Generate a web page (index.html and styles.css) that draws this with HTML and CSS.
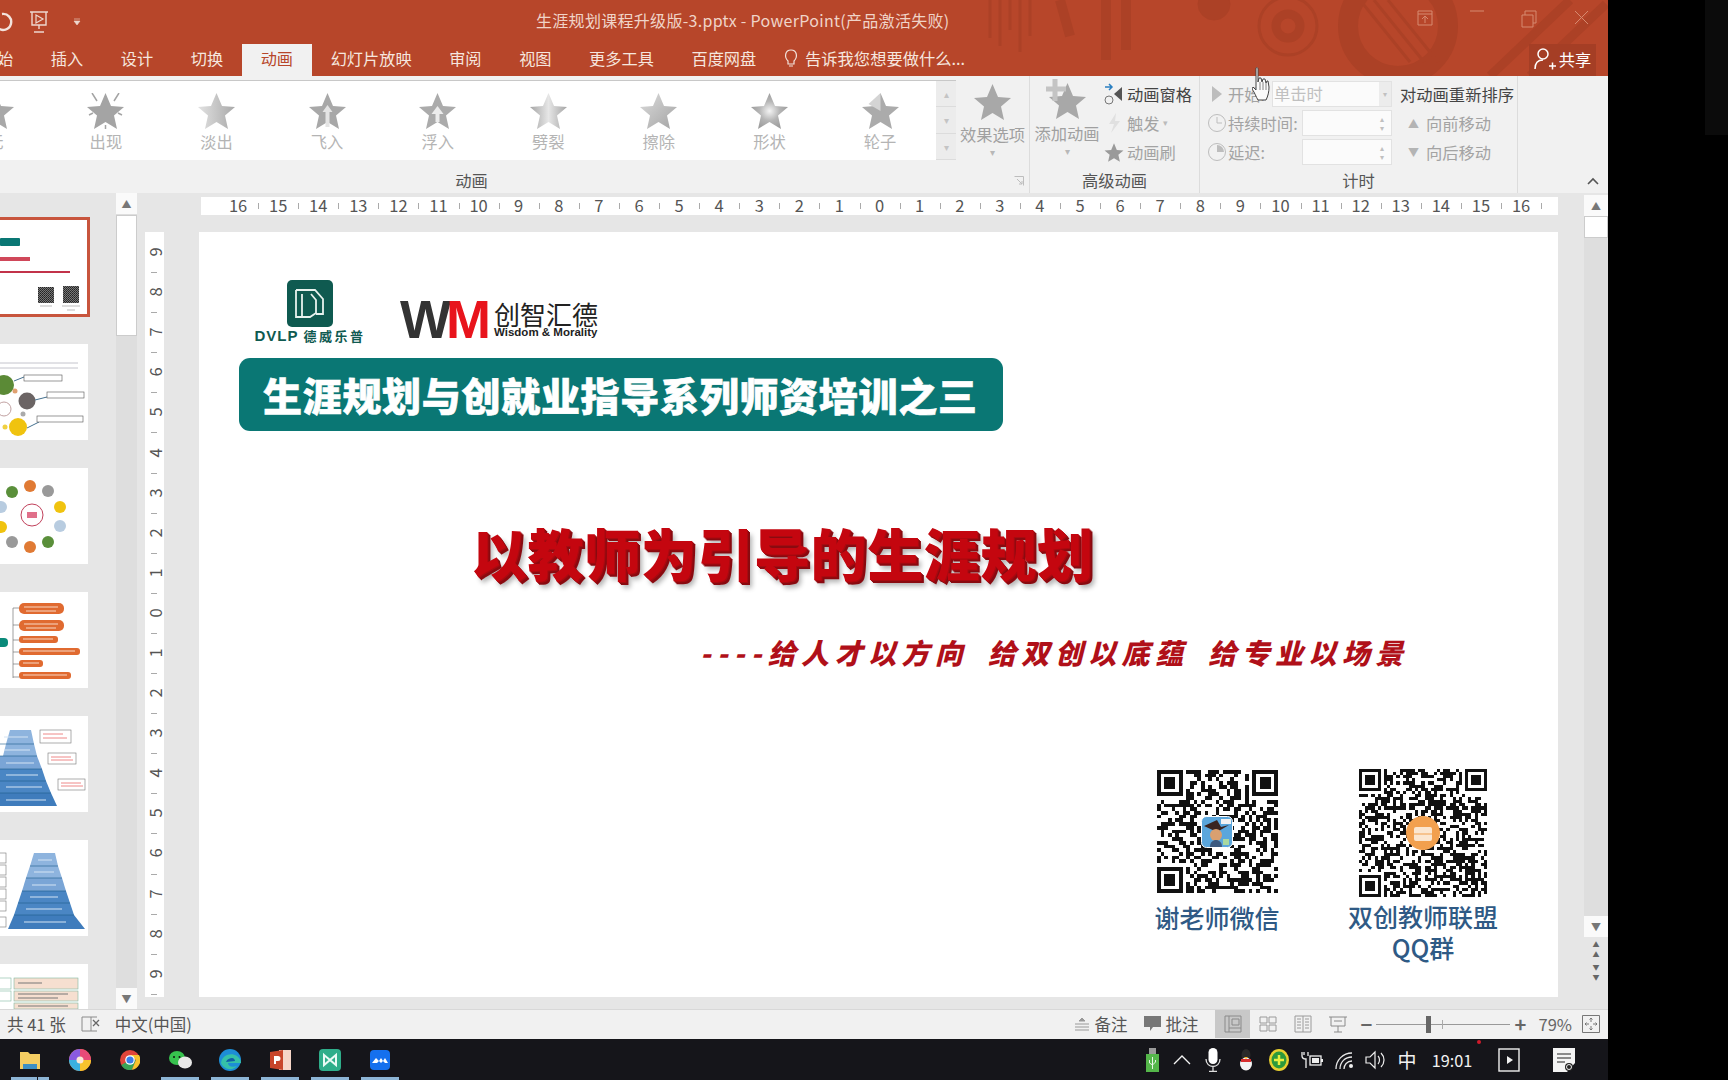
FILE: index.html
```html
<!DOCTYPE html>
<html lang="zh-CN">
<head>
  <meta charset="UTF-8">
  <title>生涯规划课程升级版-3.pptx - PowerPoint</title>
  <link rel="stylesheet" href="styles.css">
</head>
<body>

  <svg class="defs" width="0" height="0">
    <defs>
      <polygon id="star" points="18.5,0 24,13 37,14 27,22.5 30,36 18.5,29 7,36 10,22.5 0,14 13,13"/>
      <linearGradient id="fade" x1="0" x2="1"><stop offset="0" stop-color="#e2e2e2"/><stop offset="1" stop-color="#a9a9a9"/></linearGradient>
      <linearGradient id="split" x1="0" x2="1"><stop offset="0" stop-color="#a5a5a5"/><stop offset=".5" stop-color="#e6e6e6"/><stop offset="1" stop-color="#a5a5a5"/></linearGradient>
      <linearGradient id="wipe" x1="0" x2="1" y1="0" y2="1"><stop offset="0" stop-color="#dcdcdc"/><stop offset="1" stop-color="#a3a3a3"/></linearGradient>
      <radialGradient id="shape"><stop offset="0" stop-color="#f4f4f4"/><stop offset=".55" stop-color="#b5b5b5"/><stop offset="1" stop-color="#9e9e9e"/></radialGradient>
      <pattern id="tiny-qr" width="2" height="2" patternUnits="userSpaceOnUse"><rect width="2" height="2" fill="#777"/><rect width="1" height="1" fill="#222"/><rect x="1" y="1" width="1" height="1" fill="#333"/></pattern>
    </defs>
  </svg>

  <div class="screen">
    <div class="main">
      <div class="window">

        <!-- cabecalho -->
        <div class="head">
          <svg class="head-art" width="648" height="76" viewBox="0 0 648 76">
            <g fill="none" stroke="#ac4126">
              <path stroke-width="3" d="M30 0v38M40 0v46M50 0v30M60 0v52M70 0v36"/>
              <path stroke-width="10" d="M100 0l10 36M146 0v60M166 0v50"/>
              <circle cx="254" cy="4" r="16" fill="#ac4126"/>
              <circle cx="328" cy="26" r="12" stroke-width="9"/>
              <circle cx="328" cy="26" r="29" stroke-width="3"/>
              <circle cx="438" cy="26" r="50" stroke-width="20"/>
              <path stroke-width="3" d="M400 0l50 62M414 0l50 62M428 0l50 62"/>
              <path stroke-width="9" d="M530 76L610 0M570 76L646 4"/>
            </g>
          </svg>
          <div class="titlebar">
            <div class="qat">
              <svg width="14" height="22" viewBox="0 0 14 22"><path d="M2 5a8 8 0 1 1-4 14" transform="translate(0 -2)" fill="none" stroke="#f3e3dc" stroke-width="2.4"/></svg>
              <svg class="qat-show" width="22" height="24" viewBox="0 0 22 24"><path d="M2 2h18M4 2v13h14V2M11 15v4M6 22h10" fill="none" stroke="#eed8cf" stroke-width="1.4"/><path d="M8 5l7 4-7 4z" fill="none" stroke="#eed8cf" stroke-width="1.2"/></svg>
              <svg class="qat-more" width="8" height="8" viewBox="0 0 8 8"><path d="M1 1h6M1 3h6l-3 4z" fill="#eed8cf" stroke="#eed8cf" stroke-width=".6"/></svg>
            </div>
            <div class="doc-title">生涯规划课程升级版-3.pptx - PowerPoint(产品激活失败)</div>
            <div class="win-btns">
              <span class="win-btn"><svg width="18" height="16" viewBox="0 0 18 16"><path d="M2 1h14v14H2zM2 4h14M9 13V7M6 9l3-3 3 3" fill="none" stroke="#d68a70"/></svg></span>
              <span class="win-btn"><svg width="14" height="2" viewBox="0 0 14 2"><path d="M0 1h14" stroke="#d68a70"/></svg></span>
              <span class="win-btn"><svg width="16" height="18" viewBox="0 0 16 18"><path d="M1 5h11v12H1zM4 5V1h11v12h-3" fill="none" stroke="#d68a70"/></svg></span>
              <span class="win-btn"><svg width="15" height="15" viewBox="0 0 15 15"><path d="M1 1l13 13M14 1L1 14" stroke="#d68a70"/></svg></span>
            </div>
          </div>
          <div class="tabs">
            <span class="tab tab-first">开始</span>
            <span class="tab">插入</span>
            <span class="tab">设计</span>
            <span class="tab">切换</span>
            <span class="tab tab-on">动画</span>
            <span class="tab">幻灯片放映</span>
            <span class="tab">审阅</span>
            <span class="tab">视图</span>
            <span class="tab">更多工具</span>
            <span class="tab">百度网盘</span>
            <span class="tell">
              <svg width="14" height="20" viewBox="0 0 14 20"><path d="M4 13C0 9 1 2 7 2s7 7 3 11v3H4zM5 18h4" fill="none" stroke="#f3e3dc" stroke-width="1.2"/></svg>
              告诉我您想要做什么...
            </span>
            <span class="share">
              <svg width="22" height="24" viewBox="0 0 22 24"><circle cx="9" cy="7" r="5" fill="none" stroke="#fff" stroke-width="1.5"/><path d="M1 22c0-6 3-9 8-9M15 19h7M18.500 15.500v7" fill="none" stroke="#fff" stroke-width="1.5"/></svg>
              共享
            </span>
          </div>
        </div>

        <!-- faixa de opcoes -->
        <div class="ribbon">
          <div class="group group-anim">
            <div class="group-body">
              <div class="gallery">
                <div class="fx"><svg width="37" height="36"><use href="#star" fill="#a8a8a8"/></svg><span>无</span></div>
                <div class="fx"><svg width="37" height="36"><use href="#star" fill="#a4a4a4"/><path d="M5 0l5 8M32 0l-5 8M18.500 32v6M2 22l4-2M35 22l-4-2" stroke="#a4a4a4" stroke-width="1.5"/></svg><span>出现</span></div>
                <div class="fx"><svg width="37" height="36"><use href="#star" fill="url(#fade)"/></svg><span>淡出</span></div>
                <div class="fx"><svg width="37" height="36"><use href="#star" fill="#a8a8a8"/><path d="M18.500 12l-5 7h3v15h4V19h3z" fill="#e4e4e4"/></svg><span>飞入</span></div>
                <div class="fx"><svg width="37" height="36"><use href="#star" fill="#ababab"/><path d="M18.500 13l-6 8h4v8h4v-8h4z" fill="#ececec"/></svg><span>浮入</span></div>
                <div class="fx"><svg width="37" height="36"><use href="#star" fill="url(#split)"/></svg><span>劈裂</span></div>
                <div class="fx"><svg width="37" height="36"><use href="#star" fill="url(#wipe)"/></svg><span>擦除</span></div>
                <div class="fx"><svg width="37" height="36"><use href="#star" fill="url(#shape)"/></svg><span>形状</span></div>
                <div class="fx"><svg width="37" height="36"><use href="#star" fill="#ababab"/><path d="M18.500 0v18l-12-7z" fill="#d4d4d4"/></svg><span>轮子</span></div>
                <div class="gallery-scroll">
                  <span class="gs-cell">▴</span>
                  <span class="gs-cell">▾</span>
                  <span class="gs-cell gs-more">▾</span>
                </div>
              </div>
              <div class="big-btn">
                <svg width="37" height="36"><use href="#star" fill="#a8a8a8"/></svg>
                <span>效果选项</span>
                <i class="drop">▾</i>
              </div>
            </div>
            <div class="group-label">动画
              <svg class="launcher" width="10" height="10" viewBox="0 0 10 10"><path d="M.5.500h9v9M3 3l5 5M8 5v3H5" fill="none" stroke="#bdbdbd"/></svg>
            </div>
          </div>

          <div class="group group-adv">
            <div class="group-body">
              <div class="big-btn">
                <svg class="add-star" width="42" height="40" viewBox="-5 -4 42 40"><use href="#star" transform="translate(-2 0)" fill="#a8a8a8"/><path d="M4-4v22M-5 6h20" stroke="#c4c4c4" stroke-width="5"/></svg>
                <span>添加动画</span>
                <i class="drop">▾</i>
              </div>
              <div class="rows">
                <div class="row row-dark">
                  <svg width="20" height="24" viewBox="0 0 20 24"><path d="M1 5h6M5 2l3 3-3 3" fill="none" stroke="#2a7fc1" stroke-width="1.5"/><circle cx="5" cy="18" r="4" fill="none" stroke="#777"/><path d="M10 12l8-7v14z" fill="#555"/></svg>
                  动画窗格
                </div>
                <div class="row">
                  <svg width="20" height="24" viewBox="0 0 20 24"><path d="M12 2L5 13h5L7 22l9-12h-5z" fill="#e0e0e0"/></svg>
                  触发 <i class="drop-inline">▾</i>
                </div>
                <div class="row">
                  <svg width="20" height="24" viewBox="-1 -6 39 46"><use href="#star" fill="#9a9a9a"/></svg>
                  动画刷
                </div>
              </div>
            </div>
            <div class="group-label">高级动画</div>
          </div>

          <div class="group group-time">
            <div class="group-body">
              <div class="rows time-rows">
                <div class="row">
                  <svg width="14" height="18" viewBox="0 0 14 18"><path d="M2 1l10 8-10 8z" fill="#bdbdbd"/></svg>
                  开始:
                  <span class="field field-select">单击时<i>▾</i></span>
                </div>
                <div class="row">
                  <svg width="20" height="20" viewBox="0 0 20 20"><circle cx="10" cy="10" r="8.500" fill="none" stroke="#bdbdbd"/><path d="M10 4v6h5" fill="none" stroke="#bdbdbd"/></svg>
                  持续时间:
                  <span class="field"><i>▴<br>▾</i></span>
                </div>
                <div class="row">
                  <svg width="20" height="20" viewBox="0 0 20 20"><circle cx="10" cy="10" r="8.500" fill="none" stroke="#bdbdbd"/><path d="M10 3a7 7 0 0 1 7 7h-7z" fill="#bdbdbd"/></svg>
                  延迟:
                  <span class="field"><i>▴<br>▾</i></span>
                </div>
              </div>
              <div class="rows order-rows">
                <div class="row row-dark">对动画重新排序</div>
                <div class="row"><i class="tri">▲</i>向前移动</div>
                <div class="row"><i class="tri">▼</i>向后移动</div>
              </div>
            </div>
            <div class="group-label">计时</div>
          </div>

          <div class="ribbon-end">
            <svg width="12" height="8" viewBox="0 0 12 8"><path d="M1 7l5-5 5 5" fill="none" stroke="#555" stroke-width="1.6"/></svg>
          </div>
        </div>

        <!-- area de trabalho -->
        <div class="work">
          <div class="thumbs">
            <div class="thumb thumb-on">
              <svg width="87" height="94" viewBox="0 3 87 94">
                <rect y="21" width="20" height="8" rx="1" fill="#0a7774"/>
                <rect y="40" width="30" height="4" fill="#d0485a"/>
                <rect y="54" width="70" height="2" fill="#c2334a"/>
                <rect x="38" y="70" width="16" height="16" fill="url(#tiny-qr)"/>
                <rect x="63" y="69" width="16" height="17" fill="url(#tiny-qr)"/>
                <path d="M40 89h12M62 89h18M67 93h8" stroke="#bbb" stroke-width="1"/>
              </svg>
            </div>
            <div class="thumb">
              <svg width="88" height="96" viewBox="0 0 88 96">
                <path d="M0 19h78M0 24h78" stroke="#c4c4cc"/>
                <circle cx="4" cy="41" r="10" fill="#5b8a36"/>
                <circle cx="27" cy="57" r="8.500" fill="#6b6464"/>
                <circle cx="18" cy="83" r="9" fill="#f0c30f"/>
                <circle cx="15" cy="47" r="2.500" fill="#e0a070"/><circle cx="23" cy="70" r="2.500" fill="#aaa"/><circle cx="5" cy="83" r="2.500" fill="#f0d040"/>
                <circle cx="4" cy="65" r="7" fill="none" stroke="#c0a0a0"/>
                <path d="M14 37l10-4M35 56l12-3M27 84l12-6" stroke="#44708f"/>
                <rect x="24" y="31" width="38" height="6" fill="#fff" stroke="#555" stroke-width=".6"/>
                <rect x="47" y="48" width="37" height="6" fill="#fff" stroke="#555" stroke-width=".6"/>
                <rect x="37" y="72" width="46" height="6" fill="#fff" stroke="#555" stroke-width=".6"/>
              </svg>
            </div>
            <div class="thumb">
              <svg width="88" height="96" viewBox="0 0 88 96">
                <circle cx="32" cy="47" r="11" fill="#fff" stroke="#c0405a"/>
                <rect x="27" y="44" width="10" height="6" fill="#e0708a"/>
                <g fill="#e07a34"><circle cx="30" cy="18" r="6"/><circle cx="30" cy="79" r="6"/></g>
                <g fill="#5a8f3a"><circle cx="12" cy="24" r="6"/><circle cx="48" cy="74" r="6"/></g>
                <g fill="#999"><circle cx="48" cy="23" r="6"/><circle cx="12" cy="74" r="6"/></g>
                <g fill="#f0c30f"><circle cx="60" cy="39" r="6"/><circle cx="1" cy="59" r="6"/></g>
                <g fill="#b8cce0"><circle cx="60" cy="58" r="6"/><circle cx="1" cy="39" r="6"/></g>
              </svg>
            </div>
            <div class="thumb">
              <svg width="88" height="96" viewBox="0 0 88 96">
                <path d="M13 16v70M13 16h6M13 33h6M13 48h6M13 60h6M13 72h6M13 85h6" fill="none" stroke="#777" stroke-width=".7"/>
                <rect x="-6" y="46" width="14" height="9" rx="4" fill="#0a8a7a"/>
                <g fill="#e06a30">
                  <rect x="19" y="11" width="45" height="11" rx="5"/>
                  <rect x="19" y="28" width="45" height="11" rx="5"/>
                  <rect x="19" y="44" width="39" height="7" rx="3"/>
                  <rect x="19" y="56" width="61" height="7" rx="3"/>
                  <rect x="19" y="68" width="24" height="7" rx="3"/>
                  <rect x="19" y="80" width="52" height="7" rx="3"/>
                </g>
                <path d="M24 15h34M26 19h30M24 32h34M26 36h30M23 47h30M23 59h52M23 71h16M23 83h44" stroke="#f8d8c4"/>
              </svg>
            </div>
            <div class="thumb">
              <svg width="88" height="96" viewBox="0 0 88 96">
                <path d="M10 14h21l3 14H6z" fill="#8eb4de"/>
                <path d="M6 28h28l3 12H3z" fill="#8eb4de"/>
                <path d="M3 40h34l5 13H0V40z" fill="#7aa5d6"/>
                <path d="M0 53h42l4 12H0z" fill="#4a86c4"/>
                <path d="M0 65h46l5 12H0z" fill="#4a86c4"/>
                <path d="M0 77h51l6 13H0z" fill="#3f7cbc"/>
                <path d="M0 28h34M0 40h37M0 53h42M0 65h46M0 77h51" stroke="#1d5a8a" stroke-width=".6"/>
                <path d="M4 21h24M4 34h26M6 47h28M6 59h32M6 71h36M6 84h40" stroke="#d4e4f4"/>
                <rect x="40" y="14" width="31" height="13" fill="#fff" stroke="#777" stroke-width=".6"/>
                <rect x="48" y="37" width="28" height="11" fill="#fff" stroke="#777" stroke-width=".6"/>
                <rect x="58" y="63" width="27" height="11" fill="#fff" stroke="#777" stroke-width=".6"/>
                <path d="M43 18h20M43 22h24M51 41h20M51 44h22M61 67h20M61 70h22" stroke="#e88"/>
              </svg>
            </div>
            <div class="thumb">
              <svg width="88" height="96" viewBox="0 0 88 96">
                <path d="M34 13h21l3 13H30z" fill="#8eb4de"/>
                <path d="M30 26h28l4 12H26z" fill="#8eb4de"/>
                <path d="M26 38h36l4 13H22z" fill="#7aa5d6"/>
                <path d="M22 51h44l4 12H18z" fill="#4a86c4"/>
                <path d="M18 63h52l4 12H14z" fill="#4a86c4"/>
                <path d="M14 75h60l11 14H8z" fill="#3f7cbc"/>
                <path d="M30 26h28M26 38h36M22 51h44M18 63h52M14 75h60" stroke="#1d5a8a" stroke-width=".6"/>
                <path d="M38 20h14M34 32h20M32 45h24M30 57h28M26 69h36M24 82h42" stroke="#d4e4f4"/>
                <g fill="#fff" stroke="#777" stroke-width=".6">
                  <rect x="-2" y="13" width="8" height="10"/><rect x="-2" y="25" width="8" height="10"/><rect x="-2" y="37" width="8" height="10"/>
                  <rect x="-2" y="49" width="8" height="10"/><rect x="-2" y="61" width="8" height="10"/><rect x="-2" y="77" width="8" height="10"/>
                </g>
              </svg>
            </div>
            <div class="thumb">
              <svg width="88" height="96" viewBox="0 0 88 96">
                <g stroke="#80b8a0" stroke-width=".6">
                  <rect x="14" y="14" width="64" height="11" fill="#f6dfd0"/>
                  <rect x="14" y="27" width="64" height="10" fill="#f6dfd0"/>
                  <rect x="14" y="39" width="64" height="6" fill="#f6dfd0"/>
                  <rect x="-2" y="14" width="13" height="11" fill="#fff"/>
                  <rect x="-2" y="27" width="13" height="10" fill="#fff"/>
                </g>
                <path d="M18 19h24M18 30h50M18 34h40M18 42h50" stroke="#777"/>
              </svg>
            </div>
          </div>

          <div class="vscroll">
            <span class="sb-btn">▲</span>
            <span class="sb-thumb sb-thumb-left"></span>
            <span class="sb-fill"></span>
            <span class="sb-btn">▼</span>
          </div>

          <div class="canvas">
            <div class="hruler" data-ruler="h"></div>
            <div class="canvas-row">
              <div class="vruler" data-ruler="v"></div>

              <div class="slide">
                <div class="logos">
                  <div class="dvlp">
                    <svg width="46" height="47" viewBox="0 0 46 47">
                      <rect width="46" height="47" rx="5" fill="#0f5a50"/>
                      <path d="M9 10h19l8 9v15h-7M15 14v23h8l6-4V20l-5-6M9 10v27h6" fill="none" stroke="#e8f2ee" stroke-width="1.800"/>
                    </svg>
                    <div class="dvlp-name">DVLP <span>德威乐普</span></div>
                  </div>
                  <div class="wm">
                    <div class="wm-mark">W<em>M</em></div>
                    <div class="wm-text">
                      <div class="wm-cn">创智汇德</div>
                      <div class="wm-en">Wisdom &amp; Morality</div>
                    </div>
                  </div>
                </div>
                <div class="banner">生涯规划与创就业指导系列师资培训之三</div>
                <h1 class="main-title">以教师为引导的生涯规划</h1>
                <div class="sub-title"><span class="dashes">----</span>给人才以方向 给双创以底蕴 给专业以场景</div>
                <div class="qr-row">
                  <div class="qr-col">
                    <div class="qr qr-a">
                      <svg class="qr-code" data-mods="33" data-seed="17" width="121" height="123"></svg>
                      <svg class="qr-logo" width="32" height="32" viewBox="0 0 32 32">
                        <rect x=".5" y=".5" width="31" height="31" rx="5" fill="#5aa6dc" stroke="#fff"/>
                        <path d="M3 10l13-6 4 7 8-2-12 7z" fill="#3a2420"/>
                        <path d="M20 3h10v5H20z" fill="#f2f2f2"/>
                        <circle cx="15" cy="19" r="6" fill="#d9a070"/>
                        <path d="M9 31c0-5 3-7 6-7s6 2 6 7z" fill="#3c5a80"/>
                        <rect x="22" y="23" width="6" height="6" fill="#a8d8a0"/>
                      </svg>
                    </div>
                    <div class="qr-label">谢老师微信</div>
                  </div>
                  <div class="qr-col">
                    <div class="qr qr-b">
                      <svg class="qr-code" data-mods="41" data-seed="91" width="128" height="128"></svg>
                      <svg class="qr-logo" width="34" height="34" viewBox="0 0 34 34">
                        <circle cx="17" cy="17" r="17" fill="#f2a04e"/>
                        <rect x="8" y="11" width="18" height="14" rx="2" fill="#fbe6cf"/>
                        <path d="M13 11V8h8v3M8 18h18" fill="none" stroke="#f2a04e" stroke-width="1.200"/>
                      </svg>
                    </div>
                    <div class="qr-label qr-label-b">双创教师联盟<br>QQ群</div>
                  </div>
                </div>
              </div>
            </div>
          </div>

          <div class="vscroll vscroll-right">
            <span class="sb-btn">▲</span>
            <span class="sb-thumb"></span>
            <span class="sb-fill"></span>
            <span class="sb-btn">▼</span>
            <span class="sb-btn sb-double">▲<br>▲</span>
            <span class="sb-btn sb-double">▼<br>▼</span>
          </div>
        </div>

        <!-- barra de status -->
        <div class="status">
          <span class="st-count">共 41 张</span>
          <svg class="st-spell" width="20" height="18" viewBox="0 0 20 18"><path d="M1 2h9v14H1zM10 2h6M10 16h6" fill="none" stroke="#8a8a8a"/><path d="M12 5l6 6M18 5l-6 6" stroke="#666" stroke-width="1.300"/></svg>
          <span class="st-lang">中文(中国)</span>
          <span class="st-item st-first">
            <svg width="16" height="16" viewBox="0 0 16 16"><path d="M5 5l3-3 3 3zM1 8h14M1 11h14M1 14h14" fill="#999" stroke="#999"/></svg>
            备注
          </span>
          <span class="st-item">
            <svg width="17" height="16" viewBox="0 0 17 16"><path d="M0 0h17v11h-8l-3 4v-4H0z" fill="#777"/></svg>
            批注
          </span>
          <span class="view view-on"><svg width="18" height="18" viewBox="0 0 18 18"><path d="M1 1h16v16H1zM5 1v16M5 13h12M8 4h7v6H8z" fill="none" stroke="#8a8a8a"/></svg></span>
          <span class="view"><svg width="18" height="16" viewBox="0 0 18 16"><path d="M1 1h7v6H1zM10 1h7v6h-7zM1 9h7v6H1zM10 9h7v6h-7z" fill="none" stroke="#9a9a9a"/></svg></span>
          <span class="view"><svg width="18" height="18" viewBox="0 0 18 18"><path d="M1 1h16v16H1zM9 1v16M3 4h4M3 7h4M3 10h4M3 13h4M11 4h4M11 7h4M11 10h4M11 13h4" fill="none" stroke="#9a9a9a"/></svg></span>
          <span class="view"><svg width="18" height="18" viewBox="0 0 18 18"><path d="M0 2h18M2 2v9h14V2M9 11v6M5 17h8M5 6h8" fill="none" stroke="#8a8a8a"/></svg></span>
          <span class="zoom-minus">−</span>
          <span class="zoom-track"><i class="zoom-mid"></i><i class="zoom-knob"></i></span>
          <span class="zoom-plus">+</span>
          <span class="zoom-val">79%</span>
          <svg class="fit" width="18" height="18" viewBox="0 0 18 18"><path d="M.5.500h17v17H.5zM9 3v4M7.500 4.500L9 3l1.500 1.500M9 15v-4M7.500 13.500L9 15l1.500-1.500M3 9h4M4.500 7.500L3 9l1.500 1.500M15 9h-4M13.500 7.500L15 9l-1.500 1.500" fill="none" stroke="#777"/></svg>
        </div>
      </div>

      <div class="outside"><div class="outside-glow"></div></div>
    </div>

    <!-- barra de tarefas -->
    <div class="taskbar">
      <div class="apps">
        <span class="app app-split">
          <svg width="20" height="18" viewBox="0 0 20 18"><path d="M0 1h8l2 2h10v15H0z" fill="#f4cd62"/><path d="M3 13h14v5H3z" fill="#3d8fc4"/></svg>
        </span>
        <span class="app app-idle">
          <svg width="22" height="22" viewBox="0 0 22 22"><circle cx="11" cy="11" r="11" fill="#f0883a"/><path d="M11 0a11 11 0 0 1 11 11H11z" fill="#e84a78"/><path d="M11 11h11a11 11 0 0 1-11 11z" fill="#f7c32d"/><path d="M0 11a11 11 0 0 0 11 11V11z" fill="#3ab0e0"/><path d="M0 11A11 11 0 0 1 11 0v11z" fill="#8a5ae0"/><circle cx="11" cy="11" r="3.500" fill="#fbe8d8"/></svg>
        </span>
        <span class="app app-idle">
          <svg width="20" height="20" viewBox="0 0 20 20"><circle cx="10" cy="10" r="10" fill="#e2453a"/><path d="M1.300 15A10 10 0 0 0 12 19.800L16 10H10z" fill="#3aa457"/><path d="M12 19.800A10 10 0 0 0 19 5H10l6 5z" fill="#f7c32d"/><circle cx="10" cy="10" r="4.800" fill="#fff"/><circle cx="10" cy="10" r="3.600" fill="#3b7de8"/></svg>
        </span>
        <span class="app">
          <svg width="23" height="18" viewBox="0 0 23 18"><ellipse cx="8" cy="7" rx="8" ry="7" fill="#37c24e"/><ellipse cx="16" cy="11.500" rx="7" ry="6" fill="#e8e8e8"/><circle cx="5" cy="6" r="1" fill="#111"/><circle cx="10.500" cy="6" r="1" fill="#111"/></svg>
        </span>
        <span class="app">
          <svg width="22" height="22" viewBox="0 0 22 22"><circle cx="11" cy="11" r="11" fill="#1d8dd6"/><path d="M2 14C3 6 12 3 18 7c3 2 4 5 4 7h-13c0 3 4 5 9 3-4 5-13 4-16-3z" fill="#35c1a8"/><path d="M7 13c1-3 4-4 6-4s3 2 3 3z" fill="#0f5ea8"/></svg>
        </span>
        <span class="app">
          <svg width="21" height="20" viewBox="0 0 21 20"><path d="M9 0h12v20H9z" fill="#f6d6c8"/><path d="M0 2l13-2v20L0 18z" fill="#c8452a"/><path d="M4 6h4a2 2 0 0 1 0 5H6v3H4z" fill="#fff"/></svg>
        </span>
        <span class="app">
          <svg width="22" height="22" viewBox="0 0 22 22"><rect width="22" height="22" rx="4" fill="#2fae8a"/><path d="M5 6l12 10V6L5 16z" fill="none" stroke="#eafaf4" stroke-width="2"/></svg>
        </span>
        <span class="app">
          <svg width="20" height="20" viewBox="0 0 20 20"><rect width="20" height="20" rx="4" fill="#1570ee"/><path d="M2 13l4-5 3 3 2-3 2 3 2-3 3 5h-3l-2-2-2 2-2-2-2 2z" fill="#fff"/></svg>
        </span>
      </div>
      <div class="tray">
        <span class="tr"><svg width="13" height="24" viewBox="0 0 13 24"><rect x="3" width="7" height="6" fill="#9a9a9a"/><rect y="6" width="13" height="18" fill="#54b64a"/><path d="M6.500 9v12M3.500 12v3l3 2 3-3v-2" fill="none" stroke="#e8f6e8"/></svg></span>
        <span class="tr"><svg width="18" height="10" viewBox="0 0 18 10"><path d="M1 9l8-8 8 8" fill="none" stroke="#f4f4f4" stroke-width="1.300"/></svg></span>
        <span class="tr tr-wide"><svg width="16" height="24" viewBox="0 0 16 24"><rect x="3.500" y="0" width="9" height="16" rx="4.500" fill="#fff"/><path d="M1 11c0 10 14 10 14 0M8 19v4M4 23.500h8" fill="none" stroke="#ddd" stroke-width="1.300"/></svg></span>
        <span class="tr tr-wide"><svg width="14" height="22" viewBox="0 0 14 22"><ellipse cx="7" cy="6" rx="4.500" ry="6" fill="#2a2a2a"/><ellipse cx="7" cy="15" rx="6" ry="6.500" fill="#f4f4f4"/><path d="M2 10h10v3H2z" fill="#d83030"/><path d="M5 8h4l-2 2z" fill="#f5b020"/></svg></span>
        <span class="tr tr-wide"><svg width="20" height="22" viewBox="0 0 20 22"><ellipse cx="10" cy="11" rx="10" ry="11" fill="#e8d030"/><ellipse cx="10" cy="11" rx="7.500" ry="8.500" fill="#2c9a3c"/><path d="M10 6v10M5 11h10" stroke="#e8f040" stroke-width="2.500"/></svg></span>
        <span class="tr tr-wide"><svg width="22" height="18" viewBox="0 0 22 18"><path d="M1 1v4c0 2 2 3 4 3v9M3 1v3M7 1v4" fill="none" stroke="#eee" stroke-width="1.300"/><rect x="9" y="5" width="11" height="9" fill="none" stroke="#eee" stroke-width="1.300"/><rect x="11" y="7" width="7" height="5" fill="#eee"/><rect x="20" y="8" width="2" height="3" fill="#eee"/></svg></span>
        <span class="tr tr-wide"><svg width="20" height="20" viewBox="0 0 20 20"><path d="M1 19C1 10 8 3 17 3M5 19C5 12 10 7 17 7M9 19c0-4 3-8 8-8" fill="none" stroke="#e8e8e8" stroke-width="1.300"/><circle cx="16" cy="16" r="2" fill="#eee"/></svg></span>
        <span class="tr tr-sound"><svg width="22" height="20" viewBox="0 0 22 20"><path d="M1 7h4l5-5v16l-5-5H1z" fill="none" stroke="#eee" stroke-width="1.200"/><path d="M13 6c2 2 2 6 0 8M16 3c4 4 4 10 0 14" fill="none" stroke="#eee" stroke-width="1.200"/></svg></span>
        <span class="tr tr-ime">中</span>
        <span class="tr-clock">19:01<i class="red-dot"></i></span>
        <span class="tr-video"><svg width="22" height="24" viewBox="0 0 22 24"><rect x="1" y="1" width="20" height="22" fill="none" stroke="#f0f0f0" stroke-width="1.400"/><path d="M9 8l6 4-6 4z" fill="#f0f0f0"/></svg></span>
        <span class="tr-note"><svg width="22" height="24" viewBox="0 0 22 24"><path d="M0 0h22v15l-8 9H0z" fill="#f4f4f4"/><path d="M4 6h14M4 10h14M4 14h8" stroke="#222" stroke-width="1.200"/><circle cx="16" cy="19" r="4" fill="#222"/><circle cx="16" cy="19" r="2.500" fill="none" stroke="#eee"/></svg></span>
      </div>
    </div>

    <!-- cursor -->
    <svg class="cursor" width="18" height="34" viewBox="0 0 18 34">
      <path d="M4 1c1-1 2 0 2 1v13l1-4h2l1 4 1-3h2l1 4 1-2h1l1 6c0 5-1 9-3 13H6C4 30 3 26 0 22l1-2 3 3z" fill="#fbfbfb" stroke="#444" stroke-width="1"/>
      <path d="M8 15v8M11 15v8M14 16v7" stroke="#666" stroke-width=".8"/>
    </svg>
  </div>

  <script src="script.js"></script>
</body>
</html>
```

FILE: styles.css
```css
:root {
  --laranja: #b7462a;
  --laranja-escuro: #a53e25;
  --faixa: #f1f1f1;
  --fundo: #e6e6e6;
  --trilha: #dedede;
  --cinza: #a9a9a9;
  --escuro: #444;
  --teal: #0a7774;
  --azul: #2f5a85;
}

* {
  box-sizing: border-box;
}

html, body {
  margin: 0;
  height: 100%;
  background: #000;
  overflow: hidden;
}

body {
  font-family: "Noto Sans CJK SC", "Noto Sans", sans-serif;
  font-size: 16.3px;
  color: var(--escuro);
}

i, em {
  font-style: normal;
}

.defs {
  position: absolute;
}

.screen {
  position: relative;
  width: 1728px;
  height: 1080px;
  display: flex;
  flex-direction: column;
}

.main {
  display: flex;
  height: 1039px;
}

.window {
  width: 1608px;
  display: flex;
  flex-direction: column;
  overflow: hidden;
}

.outside {
  flex: 1;
  display: flex;
  justify-content: flex-end;
}

.outside-glow {
  width: 23px;
  height: 135px;
  background: #0b0b0b;
}

/* cabecalho */
.head {
  position: relative;
  height: 76px;
  background: var(--laranja);
  color: #f6e6df;
}

.head-art {
  position: absolute;
  top: 0;
  left: 960px;
}

.titlebar {
  position: relative;
  height: 44px;
  display: flex;
  align-items: center;
}

.qat {
  width: 536px;
  display: flex;
  align-items: center;
  flex-shrink: 0;
}

.qat-show {
  margin-left: 14px;
}

.qat-more {
  margin-left: 23px;
}

.doc-title {
  color: #f0d4c8;
  white-space: nowrap;
  font-size: 16px;
  letter-spacing: 0.3px;
  margin-top: -4px;
}

.win-btns {
  margin-left: auto;
  display: flex;
  padding-right: 1px;
  margin-top: -6px;
}

.win-btn {
  width: 52px;
  display: flex;
  justify-content: center;
}

.tabs {
  position: relative;
  height: 32px;
  display: flex;
  align-items: stretch;
  font-size: 16.2px;
  line-height: 28px;
}

.tab {
  padding: 0 18.8px;
  white-space: nowrap;
}

.tab-first {
  margin-left: -38px;
}

.tab-on {
  background: var(--faixa);
  color: var(--laranja);
}

.tell {
  margin-left: 9px;
  display: flex;
  align-items: center;
  gap: 7px;
  padding-bottom: 4px;
  font-size: 16.3px;
}

.share {
  margin-left: auto;
  margin-right: 12px;
  width: 67px;
  background: var(--laranja-escuro);
  display: flex;
  align-items: center;
  justify-content: center;
  gap: 3px;
  color: #fff;
  padding-bottom: 2px;
}

/* faixa de opcoes */
.ribbon {
  height: 117px;
  background: var(--faixa);
  display: flex;
  flex-shrink: 0;
}

.group {
  display: flex;
  flex-direction: column;
  border-right: 1px solid #dcdcdc;
}

.group-body {
  height: 88px;
  display: flex;
}

.group-label {
  position: relative;
  flex: 1;
  text-align: center;
  line-height: 26px;
  padding-top: 3px;
  color: #555;
}

.group-anim {
  width: 1030px;
}

.group-anim .group-label {
  padding-right: 86px;
}

.group-adv {
  width: 170px;
}

.group-time {
  width: 318px;
}

.launcher {
  position: absolute;
  right: 5px;
  top: 12px;
}

.gallery {
  width: 957px;
  height: 80px;
  margin-top: 4px;
  background: #fff;
  border-top: 1px solid #c8c8c8;
  display: flex;
  overflow: hidden;
  position: relative;
}

.fx {
  flex: 0 0 110.6px;
  display: flex;
  flex-direction: column;
  align-items: center;
  padding-top: 12px;
  color: #b4b4b4;
  line-height: 24px;
}

.fx:first-child {
  margin-left: -60px;
}

.gallery-scroll {
  width: 20px;
  margin-left: auto;
  background: #ececec;
  display: flex;
  flex-direction: column;
  color: #c4c4c4;
  font-size: 10px;
  flex-shrink: 0;
}

.gs-cell {
  flex: 1;
  display: flex;
  align-items: center;
  justify-content: center;
  border-bottom: 1px solid #dcdcdc;
}

.big-btn {
  flex-shrink: 0;
  width: 73px;
  display: flex;
  flex-direction: column;
  align-items: center;
  padding-top: 8px;
  color: #a0a0a0;
  line-height: 22px;
  white-space: nowrap;
}

.big-btn span {
  margin-top: 3px;
}

.add-star {
  margin-top: -5px;
}

.group-adv .big-btn {
  width: 74px;
}

.drop {
  font-size: 10px;
  line-height: 14px;
  color: #b8b8b8;
}

.rows {
  display: flex;
  flex-direction: column;
  padding-top: 3px;
  color: #a3a3a3;
  white-space: nowrap;
}

.row {
  height: 29px;
  flex-shrink: 0;
  display: flex;
  align-items: center;
  gap: 3px;
}

.row-dark {
  color: #444;
}

.drop-inline {
  font-size: 9px;
  color: #bbb;
}

.time-rows {
  width: 192px;
  padding-left: 7px;
}

.time-rows .row {
  gap: 1px;
}

.time-rows svg {
  width: 20px;
}

.field {
  margin-left: auto;
  width: 90px;
  height: 26px;
  background: #fbfbfb;
  border: 1px solid #e2e2e2;
  display: flex;
  align-items: center;
  justify-content: flex-end;
  font-size: 8px;
  line-height: 9px;
  color: #c0c0c0;
  padding-right: 7px;
  text-align: center;
  flex-shrink: 0;
}

.field-select {
  width: 120px;
  justify-content: space-between;
  font-size: 16.3px;
  padding-left: 1px;
  padding-right: 0;
}

.field-select i {
  font-size: 8px;
  width: 12px;
  height: 100%;
  line-height: 24px;
  background: #ececec;
}

.order-rows {
  margin-left: 8px;
}

.order-rows .row {
  gap: 7px;
}

.tri {
  font-size: 11px;
  color: #b4b4b4;
  padding-left: 8px;
}

.ribbon-end {
  flex: 1;
  display: flex;
  align-items: flex-end;
  justify-content: flex-end;
  padding: 0 9px 8px 0;
}

/* area de trabalho */
.work {
  height: 816px;
  background: var(--fundo);
  display: flex;
  flex-shrink: 0;
}

.thumbs {
  width: 116px;
  height: 100%;
  overflow: hidden;
  flex-shrink: 0;
  padding-top: 24px;
  display: flex;
  flex-direction: column;
  gap: 28px;
}

.thumb {
  width: 88px;
  height: 96px;
  background: #fff;
  flex-shrink: 0;
}

.thumb svg {
  display: block;
  filter: blur(0.35px);
}

.thumb-on {
  width: 90px;
  height: 100px;
  border: solid #c8553d;
  border-width: 3px 3px 3px 0;
  margin-bottom: -1px;
}

.vscroll {
  width: 21px;
  background: var(--trilha);
  display: flex;
  flex-direction: column;
  flex-shrink: 0;
}

.sb-btn {
  height: 21px;
  flex-shrink: 0;
  background: #fafafa;
  color: #777;
  font-size: 10px;
  display: flex;
  align-items: center;
  justify-content: center;
  text-align: center;
  line-height: 8px;
}

.sb-thumb {
  height: 22px;
  flex-shrink: 0;
  background: #fff;
  border: 1px solid #ccc;
  margin-top: 1px;
}

.sb-thumb-left {
  height: 121px;
}

.sb-fill {
  flex: 1;
}

.sb-double {
  height: 23px;
  background: transparent;
  font-size: 7px;
  line-height: 10px;
  color: #666;
}

.canvas {
  width: 1447px;
  flex-shrink: 0;
  padding-top: 4px;
}

.hruler {
  margin-left: 64px;
  width: 1357px;
  height: 18px;
  background: #fff;
  padding-left: 17px;
  display: flex;
}

.h-cell {
  position: relative;
  flex: 0 0 40.1px;
  text-align: center;
  font-size: 16.5px;
  line-height: 17px;
  color: #555;
}

.h-cell::after {
  content: "";
  position: absolute;
  right: -1px;
  top: 6px;
  width: 1px;
  height: 6px;
  background: #aaa;
}

.canvas-row {
  margin-top: 17px;
  display: flex;
}

.vruler {
  margin-left: 8px;
  margin-right: 35px;
  width: 19px;
  height: 765px;
  background: #fff;
  flex-shrink: 0;
}

.v-cell {
  position: relative;
  height: 40.1px;
  display: flex;
  align-items: center;
  justify-content: center;
  font-size: 16.5px;
  color: #555;
}

.v-cell span {
  transform: rotate(-90deg);
}

.v-cell::after {
  content: "";
  position: absolute;
  bottom: -1px;
  left: 6px;
  width: 6px;
  height: 1px;
  background: #aaa;
}

.vscroll-right {
  width: 24px;
  padding-top: 2px;
  padding-bottom: 26px;
  background: var(--fundo);
}

.vscroll-right .sb-fill {
  background: var(--trilha);
}

.vscroll-right .sb-thumb {
  margin-top: 0;
}

/* slide */
.slide {
  width: 1359px;
  height: 765px;
  background: #fff;
  flex-shrink: 0;
  padding-top: 48px;
}

.logos {
  height: 65px;
  display: flex;
  padding-left: 55px;
  gap: 34px;
}

.dvlp {
  width: 112px;
  display: flex;
  flex-direction: column;
  align-items: center;
}

.dvlp-name {
  font-family: "Liberation Sans", sans-serif;
  font-weight: bold;
  font-size: 15px;
  line-height: 18px;
  color: #0f5a50;
  white-space: nowrap;
  letter-spacing: 1px;
}

.dvlp-name span {
  font-family: "Noto Sans CJK SC", sans-serif;
  font-size: 13px;
  letter-spacing: 2.5px;
}

.wm {
  display: flex;
  padding-top: 20px;
  gap: 4px;
}

.wm-mark {
  font-family: "Liberation Sans", sans-serif;
  font-weight: bold;
  font-size: 54px;
  line-height: 38px;
  letter-spacing: -5px;
  color: #333;
  width: 90px;
}

.wm-mark em {
  color: #e8141c;
}

.wm-text {
  width: 108px;
}

.wm-cn {
  font-size: 26px;
  line-height: 27px;
  color: #222;
  white-space: nowrap;
}

.wm-en {
  font-family: "Liberation Sans", sans-serif;
  font-weight: bold;
  font-size: 11.5px;
  line-height: 11px;
  color: #222;
  white-space: nowrap;
}

.banner {
  margin: 13px 0 0 40px;
  width: 764px;
  height: 73px;
  background: var(--teal);
  border-radius: 11px;
  color: #fff;
  font-weight: 900;
  font-size: 39px;
  letter-spacing: 0.7px;
  line-height: 73px;
  padding-left: 24px;
  white-space: nowrap;
  -webkit-text-stroke: 0.6px #fff;
}

.main-title {
  margin: 83px 0 0 272px;
  font-size: 56px;
  line-height: 76px;
  font-weight: 900;
  letter-spacing: 0.6px;
  color: #c4060f;
  white-space: nowrap;
  text-shadow: 1px 1px 0 #a80a10, 2px 2px 0 #8a0a10, 3px 3px 0 #8a0a10, 5px 6px 5px rgba(0, 0, 0, 0.3);
}

.sub-title {
  margin: 42px 0 0 501px;
  font-size: 28px;
  line-height: 40px;
  font-weight: 900;
  font-style: italic;
  letter-spacing: 5.4px;
  word-spacing: 8px;
  color: #b01019;
  white-space: nowrap;
}

.dashes {
  letter-spacing: 6.2px;
}

.qr-row {
  margin: 97px 0 0 933px;
  display: flex;
  gap: 36px;
}

.qr-col {
  width: 170px;
  display: flex;
  flex-direction: column;
  align-items: center;
  text-align: center;
}

.qr {
  position: relative;
  line-height: 0;
}

.qr-a {
  margin-top: 1px;
}

.qr-logo {
  position: absolute;
  top: 50%;
  left: 50%;
  transform: translate(-50%, -50%);
}

.qr-label {
  margin-top: 9px;
  font-size: 25px;
  line-height: 31px;
  font-weight: 500;
  color: var(--azul);
  white-space: nowrap;
}

.qr-label-b {
  margin-top: 4px;
}

/* barra de status */
.status {
  height: 30px;
  flex-shrink: 0;
  background: var(--faixa);
  border-top: 1px solid #d8d8d8;
  display: flex;
  align-items: center;
  color: #555;
  white-space: nowrap;
  padding-right: 8px;
  padding-bottom: 1px;
  font-size: 16.5px;
}

.st-count {
  margin-left: 7px;
}

.st-spell {
  margin-left: 15px;
}

.st-lang {
  margin-left: 14px;
}

.st-item {
  display: flex;
  align-items: center;
  gap: 4px;
  margin-left: 17px;
}

.st-first {
  margin-left: auto;
}

.view {
  width: 35px;
  height: 100%;
  display: flex;
  align-items: center;
  justify-content: center;
}

.view-on {
  background: #c8c8c8;
  margin-left: 17px;
}

.zoom-minus,
.zoom-plus {
  font-size: 20px;
  font-weight: bold;
  color: #666;
  width: 18px;
  text-align: center;
  line-height: 1;
}

.zoom-minus {
  margin-left: 2px;
}

.zoom-track {
  position: relative;
  width: 134px;
  height: 1px;
  background: #999;
  margin: 0 1px;
}

.zoom-knob,
.zoom-mid {
  position: absolute;
  top: -8px;
  width: 5px;
  height: 17px;
  left: 50px;
  background: #666;
}

.zoom-mid {
  left: 66px;
  width: 1px;
  top: -4px;
  height: 9px;
  background: #aaa;
}

.zoom-val {
  margin-left: 9px;
  color: #666;
}

.fit {
  margin-left: 10px;
}

/* barra de tarefas */
.taskbar {
  height: 41px;
  width: 1608px;
  background: #15151a;
  display: flex;
  align-items: center;
  flex-shrink: 0;
  position: relative;
}

.apps {
  display: flex;
  height: 100%;
  padding-left: 5px;
}

.app {
  position: relative;
  width: 50px;
  display: flex;
  align-items: center;
  justify-content: center;
}

.app::after {
  content: "";
  position: absolute;
  left: 6px;
  right: 6px;
  bottom: 0;
  height: 3px;
  background: #8db5d6;
}

.app-idle::after {
  display: none;
}

.app-split::before {
  content: "";
  position: absolute;
  left: 32px;
  bottom: 0;
  width: 1px;
  height: 3px;
  background: #15151a;
  z-index: 1;
}

.tray {
  margin-left: auto;
  margin-right: 17px;
  display: flex;
  align-items: center;
  color: #f2f2f2;
  height: 100%;
}

.tr {
  width: 29px;
  display: flex;
  justify-content: center;
}

.tr-wide {
  width: 33px;
}

.tr-sound {
  width: 30px;
}

.tr-ime {
  width: 32px;
  font-size: 19px;
}

.tr-clock {
  position: relative;
  width: 58px;
  text-align: center;
}

.red-dot {
  position: absolute;
  top: -8px;
  right: 0;
  width: 4px;
  height: 4px;
  border-radius: 50%;
  background: #d11a2a;
}

.tr-video {
  width: 56px;
  display: flex;
  justify-content: center;
}

.tr-note {
  width: 54px;
  display: flex;
  justify-content: center;
}

.cursor {
  position: absolute;
  left: 1252px;
  top: 67px;
}
```

FILE: script.js
```js
// reguas
function montaRegua(el, max, classe) {
  for (let i = -max; i <= max; i++) {
    const cel = document.createElement('div');
    const num = document.createElement('span');
    cel.className = classe;
    num.textContent = Math.abs(i);
    cel.appendChild(num);
    el.appendChild(cel);
  }
}

montaRegua(document.querySelector('[data-ruler="h"]'), 16, 'h-cell');
montaRegua(document.querySelector('[data-ruler="v"]'), 9, 'v-cell');

// qr de enfeite, o padrao so precisa parecer um qr
function desenhaQr(svg) {
  const n = Number(svg.dataset.mods);
  let seed = Number(svg.dataset.seed);
  const aleatorio = () => {
    seed = (seed * 1103515245 + 12345) & 0x7fffffff;
    return (seed >> 12) % 100;
  };

  let d = '';
  const finder = (x, y) => {
    d += `M${x} ${y}h7v7h-7zM${x + 1} ${y + 1}v5h5v-5zM${x + 2} ${y + 2}h3v3h-3z`;
  };
  const naQuina = (x, y) => (x < 8 && y < 8) || (x >= n - 8 && y < 8) || (x < 8 && y >= n - 8);

  for (let y = 0; y < n; y++) {
    for (let x = 0; x < n; x++) {
      if (!naQuina(x, y) && aleatorio() < 52) d += `M${x} ${y}h1v1h-1z`;
    }
  }
  finder(0, 0);
  finder(n - 7, 0);
  finder(0, n - 7);

  svg.setAttribute('viewBox', `0 0 ${n} ${n}`);
  svg.setAttribute('preserveAspectRatio', 'none');
  svg.setAttribute('shape-rendering', 'crispEdges');
  svg.innerHTML = `<path fill-rule="evenodd" fill="#111" d="${d}"/>`;
}

document.querySelectorAll('.qr-code').forEach(desenhaQr);
```
